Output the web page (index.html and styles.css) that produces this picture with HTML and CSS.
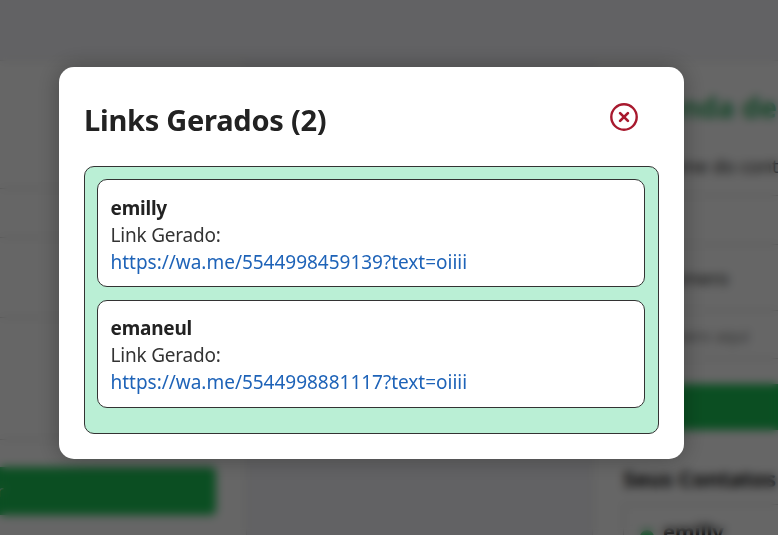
FILE: index.html
```html
<!DOCTYPE html>
<html lang="pt-BR">
<head>
<meta charset="utf-8">
<title>Links Gerados</title>
<link rel="stylesheet" href="styles.css">
</head>
<body>
<div class="page">
  <section class="panel panel-left">
    <div class="field field-first"></div>
    <div class="field field-second"></div>
    <div class="send">r</div>
  </section>
  <section class="panel panel-right">
    <h1 class="agenda">Agenda de</h1>
    <p class="label">Nome do cont</p>
    <div class="input input-name"></div>
    <div class="input input-number">Número</div>
    <div class="input input-extra">Número aqui</div>
    <div class="save"></div>
    <h2 class="contacts">Seus Contatos</h2>
    <div class="contact"><span class="dot"></span><b>emilly</b></div>
  </section>
</div>
<div class="overlay">
  <main class="modal">
    <header class="head">
      <h2 class="title"><span>Links Gerados (2)</span></h2>
      <svg class="close" viewBox="0 0 28 28" fill="none" stroke="#a8192e" stroke-width="2.4" stroke-linecap="round"><circle cx="14" cy="14" r="12.7"/><path d="M10.1 10.1 17.9 17.9M17.9 10.1 10.1 17.9" stroke-width="2.7"/></svg>
    </header>
    <div class="list">
      <article class="card card-first">
        <strong class="name">emilly</strong>
        <span class="caption">Link Gerado:</span>
        <a class="link">https://wa.me/5544998459139?text=oiiii</a>
      </article>
      <article class="card">
        <strong class="name">emaneul</strong>
        <span class="caption">Link Gerado:</span>
        <a class="link">https://wa.me/5544998881117?text=oiiii</a>
      </article>
    </div>
  </main>
</div>
</body>
</html>
```
FILE: styles.css
```css
* { box-sizing: border-box; }
body {
  margin: 0;
  height: 535px;
  overflow: hidden;
  background: #f5f5f9;
  color: #222;
  font-family: "Segoe UI", "Noto Sans", sans-serif;
}
h1, h2, p { margin: 0; }
.page {
  display: grid;
  grid-template-columns: 247px 1fr 186px;
  width: 778px;
  height: 535px;
  overflow: hidden;
  padding-top: 60px;
}
.panel { background: #fff; border: 1px solid #e0e0e0; height: 500px; overflow: hidden; }
.panel-left { padding: 127px 30px 0 0; border-left: 0; }
.panel-right { grid-column: 3; padding: 20px 0 0 30px; white-space: nowrap; border-right: 0; }
.field { border: solid #ccc; border-width: 1px 0; }
.field-first { height: 50px; }
.field-second { height: 123px; margin-top: 79px; }
.send {
  height: 48px;
  margin-top: 27px;
  border-radius: 0 5px 5px 0;
  background: #1cc456;
  color: #fff;
  line-height: 48px;
  text-indent: -3px;
}
.agenda { height: 50px; padding-left: 3px; font-size: 28.5px; line-height: 52px; color: #32b065; }
.label { margin-top: 20px; height: 30px; padding-left: 32px; font-size: 18.5px; line-height: 30px; }
.input { border: 1px solid #ccc; border-right: 0; padding-left: 23px; }
.input-name { margin-top: 14px; height: 50px; }
.input-number { height: 66px; padding-left: 33px; font-size: 18.5px; line-height: 66px; border-top: 0; }
.input-extra { height: 48px; border-top: 0; font-size: 16.5px; line-height: 49px; color: #777; }
.save { height: 46px; margin-top: 25px; background: #1cc456; }
.contacts { margin-top: 32px; height: 30px; font-size: 22px; line-height: 32px; letter-spacing: -.2px; color: #111; }
.contact { display: flex; gap: 9px; margin-top: 12px; height: 100px; padding: 13px 0 0 16px; border: 1px solid #ccc; border-right: 0; font-size: 20px; color: #111; }
.dot { width: 14px; height: 14px; margin-top: 12px; border-radius: 50%; background: #1cc456; }
.overlay {
  position: absolute;
  inset: 0;
  padding: 67px 0 0 59px;
  background: rgba(0, 0, 0, .6);
  backdrop-filter: blur(5px);
}
.modal {
  width: 625px;
  height: 392px;
  padding: 25px;
  border-radius: 15px;
  background: #fff;
  box-shadow: 0 0 25px rgba(0, 0, 0, .3);
}
.head { display: flex; justify-content: space-between; height: 74px; padding-right: 21px; }
.title { font-size: 29px; line-height: 56px; letter-spacing: -.25px; white-space: nowrap; }
.close { width: 28px; height: 28px; margin-top: 11px; }
.list {
  display: flex;
  flex-direction: column;
  gap: 13px;
  height: 268px;
  padding: 12px 13px 25px 12px;
  border: 1px solid #333;
  border-radius: 10px;
  background: #baefd5;
}
.card {
  display: flex;
  flex-direction: column;
  height: 108px;
  padding: 14px 12.5px 10px;
  border: 1px solid #333;
  border-radius: 10px;
  background: #fff;
  font-size: 19px;
  line-height: 27px;
}
.card-first { padding-top: 15px; }
.name, .caption, .link { width: max-content; }
.name { letter-spacing: -.2px; }
.caption { color: #333; letter-spacing: -.2px; }
.link { color: #1e63b8; letter-spacing: -.02px; }
```
